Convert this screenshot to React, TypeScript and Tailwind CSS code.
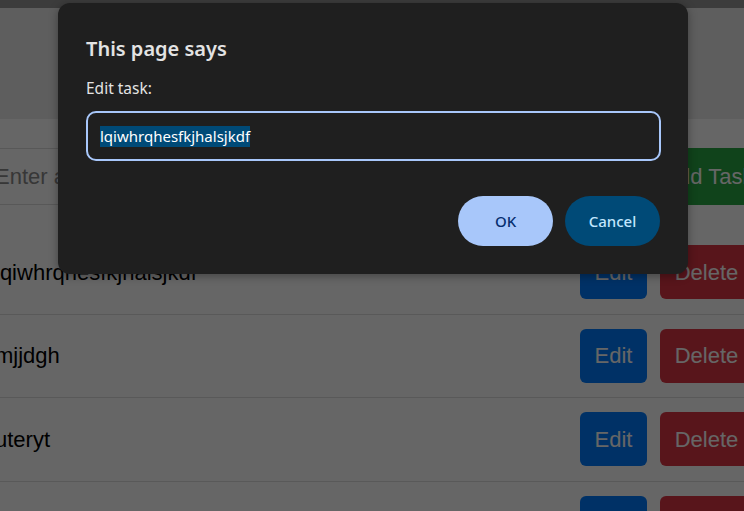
import React from "react";

const tasks = ["lqiwhrqhesfkjhalsjkdf", "mjjdgh", "uteryt", "qwerty"];

function TaskRow({ text }: { text: string }) {
  return (
    <div className="flex h-[83.5px] items-center border-b border-[#dedede] pl-[9px] pr-[18px]">
      <span className="flex-1 text-[22px] text-black">{text}</span>
      <button className="h-[54px] w-[67px] rounded-[6px] bg-[#007bff] text-[22px] text-white">
        Edit
      </button>
      <button className="ml-[13px] h-[54px] w-[93px] rounded-[6px] bg-[#dc3545] text-[22px] text-white">
        Delete
      </button>
    </div>
  );
}

function PromptDialog() {
  return (
    <div className="absolute left-[58px] top-[3px] flex h-[271px] w-[630px] flex-col rounded-[12px] bg-[#1f1f1f] px-[28px] pb-[28px] pt-[31px] font-['Noto_Sans',sans-serif] shadow-[0_2px_10px_rgba(0,0,0,0.35)]">
      <h2 className="text-[20px] font-semibold leading-[30px] text-[#e3e3e3]">This page says</h2>
      <p className="mt-[13px] text-[15.5px] leading-[22px] text-[#e3e3e3]">Edit task:</p>
      <div className="mt-[12px] flex h-[50px] w-[575px] items-center rounded-[10px] border-2 border-[#a8c7fa] px-[12px]">
        <span className="bg-[#004a77] text-[15px] leading-[21px] text-white">lqiwhrqhesfkjhalsjkdf</span>
      </div>
      <div className="mt-auto flex justify-end gap-[12px]">
        <button className="h-[50px] w-[95px] rounded-full bg-[#a8c7fa] text-[15px] font-medium text-[#062e6f]">
          OK
        </button>
        <button className="h-[50px] w-[95px] rounded-full bg-[#004a77] text-[15px] font-medium text-[#c2e7ff]">
          Cancel
        </button>
      </div>
    </div>
  );
}

export default function App() {
  return (
    <div className="relative h-[511px] w-[744px] overflow-hidden bg-white font-['Liberation_Sans',Arial,sans-serif]">
      <div className="h-[8px] bg-[#969696]" />
      <div className="h-[111px] bg-[#ececec]" />

      <div className="-ml-[14px] w-[785px]">
        <div className="mt-[29px] flex h-[57px]">
          <input
            className="h-full flex-1 border-y border-[#dcdcdc] pl-[9px] text-[22px] text-black outline-none placeholder:text-[#8a8a8a]"
            placeholder="Enter a new task"
          />
          <button className="h-full w-[125px] bg-[#28a745] text-[22px] text-white">Add Task</button>
        </div>

        <div className="mt-[26px]">
          {tasks.map((t) => (
            <TaskRow key={t} text={t} />
          ))}
        </div>
      </div>

      <div className="absolute inset-0 bg-black/60" />
      <PromptDialog />
    </div>
  );
}
